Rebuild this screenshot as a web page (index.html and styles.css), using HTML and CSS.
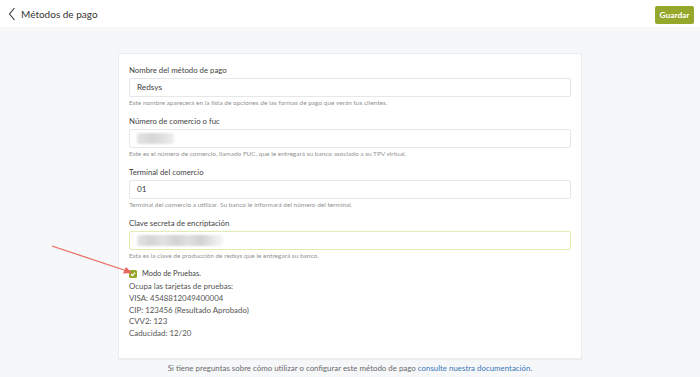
FILE: index.html
```html
<!DOCTYPE html>
<html lang="es">
<head>
<meta charset="utf-8">
<title>Métodos de pago</title>
<link rel="stylesheet" href="styles.css">
</head>
<body>
<header class="topbar">
  <div class="title-wrap">
    <svg class="back" width="8" height="14" viewBox="0 0 8 14"><path d="M6.5 1 L1.5 7 L6.5 13" fill="none" stroke="#333" stroke-width="1.1"/></svg>
    <h1 class="title">Métodos de pago</h1>
  </div>
  <button class="save">Guardar</button>
</header>
<main class="page">
  <section class="card">
    <div class="field">
      <label class="label">Nombre del método de pago</label>
      <div class="input">Redsys</div>
      <p class="help">Este nombre aparecerá en la lista de opciones de las formas de pago que verán tus clientes.</p>
    </div>
    <div class="field">
      <label class="label">Número de comercio o fuc</label>
      <div class="input"><span class="blur blur-short"></span></div>
      <p class="help">Este es el número de comercio, llamado FUC, que le entregará su banco asociado a su TPV virtual.</p>
    </div>
    <div class="field">
      <label class="label">Terminal del comercio</label>
      <div class="input">01</div>
      <p class="help">Terminal del comercio a utilizar. Su banco le informará del número del terminal.</p>
    </div>
    <div class="field">
      <label class="label">Clave secreta de encriptación</label>
      <div class="input input-focus"><span class="blur blur-long"></span></div>
      <p class="help">Esta es la clave de producción de redsys que le entregará su banco.</p>
    </div>
    <div class="check-row">
      <span class="checkbox"><svg width="6" height="6" viewBox="0 0 6 6"><path d="M1 3.2 L2.4 4.6 L5 1.6" fill="none" stroke="#fff" stroke-width="1.2"/></svg></span>
      <span class="check-label">Modo de Pruebas.</span>
    </div>
    <div class="test-info">
      <p>Ocupa las tarjetas de pruebas:</p>
      <p>VISA: 4548812049400004</p>
      <p>CIP: 123456 (Resultado Aprobado)</p>
      <p>CVV2: 123</p>
      <p>Caducidad: 12/20</p>
    </div>
  </section>
  <p class="footer">Si tiene preguntas sobre cómo utilizar o configurar este método de pago <a href="#">consulte nuestra documentación</a>.</p>
  <svg class="arrow" width="90" height="36" viewBox="0 0 90 36">
    <line x1="2" y1="2" x2="80" y2="28" stroke="#e8685e" stroke-width="1.2"/>
    <path d="M82 29 L73 29.5 L76 23 Z" fill="#e8685e"/>
  </svg>
</main>
</body>
</html>
```
FILE: styles.css
```css
* { box-sizing: border-box; }
html, body { margin: 0; padding: 0; }
body {
  background: #f6f7f9;
  font-family: Lato, "Open Sans", "Liberation Sans", sans-serif;
  color: #333;
  width: 700px;
  height: 377px;
  overflow: hidden;
  position: relative;
}
.topbar {
  height: 27px;
  background: #fff;
  display: flex;
  align-items: center;
  justify-content: space-between;
  padding: 0 6px 0 8px;
}
.title-wrap { display: flex; align-items: center; gap: 5px; }
.back { display: block; }
.title {
  margin: 0;
  font-size: 10px;
  font-weight: 400;
  color: #333;
}
.save {
  border: none;
  background: #95a82b;
  color: #fff;
  font-family: inherit;
  font-size: 8.3px;
  font-weight: 700;
  height: 18px;
  width: 39px;
  padding: 0;
  border-radius: 2px;
  margin-top: 2px;
}
.page {
  padding-top: 26px;
}
.card {
  width: 464px;
  margin: 0 auto;
  background: #fff;
  border: 1px solid #ebecee;
  box-shadow: 0 1px 1px rgba(0,0,0,0.04);
  padding: 11px 10px 18px 10px;
}
.field { margin-bottom: 9px; }
.label {
  display: block;
  font-size: 7.8px;
  line-height: 10px;
  height: 10px;
  color: #444;
  margin-bottom: 3px;
}
.input {
  height: 19px;
  border: 1px solid #e6e7e9;
  border-radius: 2px;
  font-size: 8.2px;
  line-height: 17px;
  padding: 0 7px;
  color: #3a3a3a;
  display: flex;
  align-items: center;
}
.input-focus { border-color: #e2ecae; }
.blur {
  display: block;
  height: 11px;
  border-radius: 2px;
  filter: blur(1.2px);
}
.blur-short {
  width: 37px;
  background: linear-gradient(90deg, #e4e4e4 0%, #d6d6d6 40%, #e0e0e0 70%, #f0f0f0 100%);
}
.blur-long {
  width: 86px;
  background: linear-gradient(90deg, #e6e6e6 0%, #d5d5d5 15%, #e2e2e2 30%, #d3d3d3 45%, #dfdfdf 60%, #d2d2d2 75%, #eaeaea 90%, #f6f6f6 100%);
}
.help {
  margin: 2px 0 0;
  font-size: 6.5px;
  line-height: 8px;
  color: #939393;
}
.check-row {
  display: flex;
  align-items: center;
  gap: 5px;
  height: 9px;
}
.checkbox {
  width: 8px;
  height: 8px;
  border-radius: 1.5px;
  background: #95a82b;
  display: flex;
  align-items: center;
  justify-content: center;
}
.checkbox svg { display: block; }
.check-label { font-size: 7.4px; color: #444; }
.test-info { margin-top: 3px; }
.test-info p {
  margin: 0;
  font-size: 7.9px;
  line-height: 11.8px;
  color: #555;
}
.footer {
  margin: 3px 0 0;
  text-align: center;
  font-size: 7.9px;
  line-height: 12px;
  color: #6a6a6a;
}
.footer a { color: #3a78b5; text-decoration: none; }
.arrow {
  position: absolute;
  left: 50px;
  top: 244px;
}
```
